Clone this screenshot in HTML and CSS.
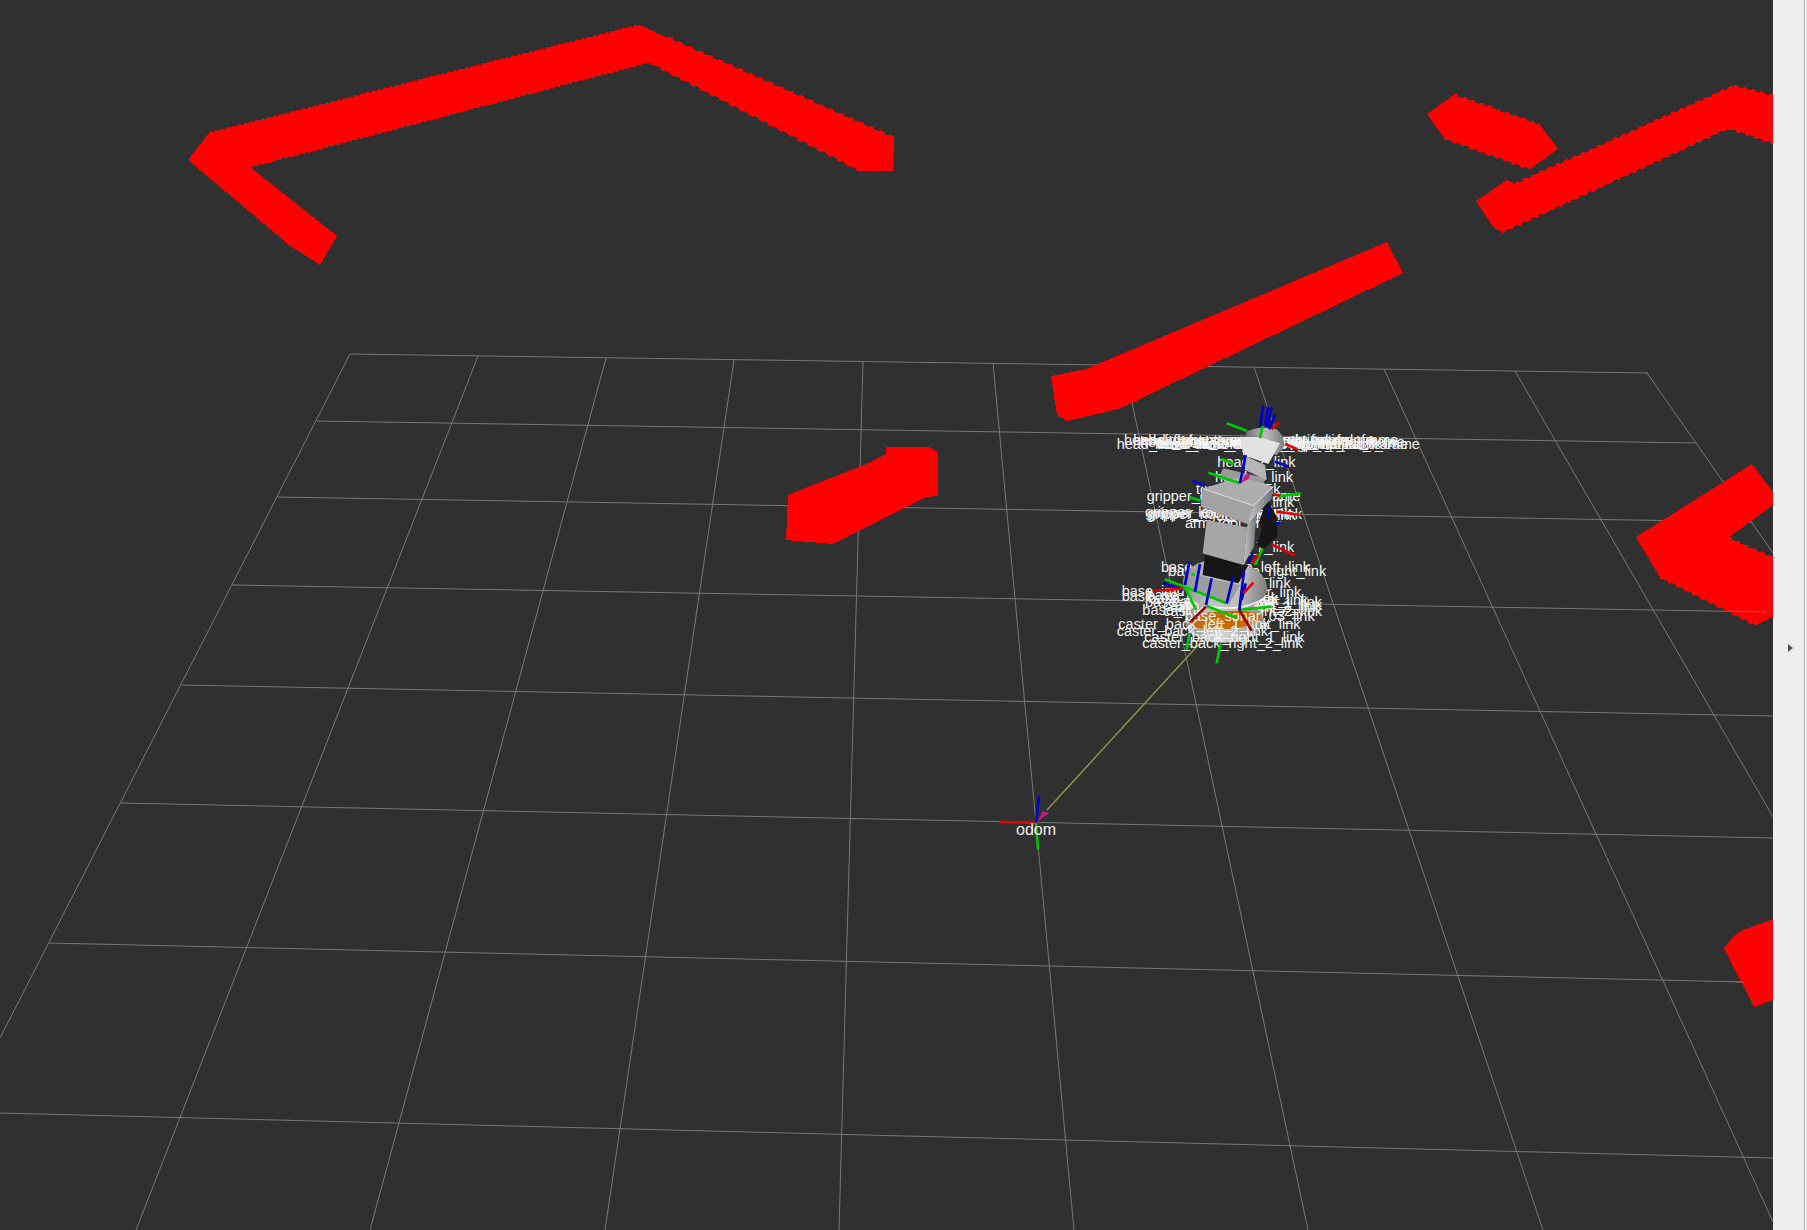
FILE: index.html
```html
<!DOCTYPE html>
<html lang="en">
<head>
<meta charset="utf-8">
<title>RViz</title>
<link rel="stylesheet" href="styles.css">
</head>
<body>
<div class="app">
  <main class="viewport">
    <svg class="scene" viewBox="0 0 1773 1230" xmlns="http://www.w3.org/2000/svg">
      <defs>
        <linearGradient id="disc" x1="0" y1="0" x2="1" y2="0">
          <stop offset="0" stop-color="#8c8c8c"/><stop offset=".35" stop-color="#c4c4c4"/><stop offset=".7" stop-color="#bdbdbd"/><stop offset="1" stop-color="#7c7c7c"/>
        </linearGradient>
        <linearGradient id="rim" x1="0" y1="0" x2="1" y2="0">
          <stop offset="0" stop-color="#8a8a8a"/><stop offset=".45" stop-color="#d8d8d8"/><stop offset="1" stop-color="#8c8c8c"/>
        </linearGradient>
        <linearGradient id="side" x1="0" y1="0" x2="1" y2="0">
          <stop offset="0" stop-color="#c6c6c6"/><stop offset="1" stop-color="#6f6f6f"/>
        </linearGradient>
        <linearGradient id="headback" x1="0" y1="0" x2="1" y2="0">
          <stop offset="0" stop-color="#6e6e6e"/><stop offset=".5" stop-color="#bcbcbc"/><stop offset="1" stop-color="#7e7e7e"/>
        </linearGradient>
      </defs>

      <path class="grid" d="M350 354L1648 373M317 421L1695 443M278 497L1751 522M232 585L1767 612M182 685L1773 716M121 803L1773 838M49 943L1744 982M0 1113L1773 1158"/>
      <path class="grid" d="M350 354L0 1038M478 356L136 1230M606 358L370 1230M734 360L605 1230M863 361L839 1230M993 363L1074 1230M1124 365L1308 1230M1254 367L1543 1230M1384 369L1773 1222M1515 371L1773 817M1647 373L1773 553"/>

      <g class="walls">
        <polygon points="188,160 209,133 640,25 668,38 894,138 893,171 861,171 651,63 646,63 250,167 337,236 320,265 289,245"/>
        <polygon points="1427,114 1454,95 1540,125 1558,149 1530,169 1444,138"/>
        <polygon points="1476,201 1507,180 1515,184 1734,86 1773,96 1773,143 1728,128 1502,232 1494,228"/>
        <polygon points="1387,242 1403,273 1119,409 1067,421 1057,415 1051,376 1086,369"/>
        <polygon points="886,447 929,447 938,452 938,496 926,497 833,544 786,540 788,495 871,462 886,454"/>
        <polygon points="1752,464 1773,492 1773,505 1728,538 1773,558 1773,617 1756,625 1660,577 1636,537"/>
        <polygon points="1724,948 1735,935 1743,930 1773,919 1773,1000 1754,1007"/>
        <path class="jag jag-fine" d="M209 133L640 25M250 167L646 63"/>
        <path class="jag jag-wide" d="M668 38L894 138M861 171L651 63"/>
        <path class="jag jag-mid" d="M1454 95L1540 125M1444 138L1530 169M1515 184L1734 86M1502 232L1728 128M1734 86L1773 96M1728 128L1773 143M1660 577L1756 625M1728 538L1773 558"/>
      </g>
      <path class="grid-over" d="M1727 611L1767 612M1735 982L1744 982"/>

      <line class="tf-line" x1="1201" y1="642" x2="1047" y2="810"/>
      <polygon class="tf-arrow" points="1037,822 1043,811 1049,813"/>
      <path class="axis axis-b" d="M1036 823L1039 796"/>
      <path class="axis axis-r" d="M1036 823L999 822"/>
      <path class="axis axis-g" d="M1036 823L1038 850"/>
      <text class="label-odom" x="1016" y="835">odom</text>

      <g transform="translate(1080 390) scale(.33333)">
        <g class="labels">
          <text x="110" y="177">head_front_camera_depth_optical_frame</text>
          <text x="132" y="165">head_front_camera_rgb_optical_frame</text>
          <text x="160" y="165">head_front_camera_depth_optical_frame</text>
          <text x="180" y="170">head_front_camera_depth_optical_frame</text>
          <text x="225" y="177">head_front_camera_depth_optical_frame</text>
          <text x="235" y="176">head_front_camera_rgb_optical_frame</text>
          <text x="205" y="165">head_front_camera_rgb_frame</text>
          <text x="290" y="170">head_front_camera_link</text>
          <text x="412" y="230">head_2_link</text>
          <text x="405" y="275">head_1_link</text>
          <text x="348" y="313">torso_lift_link</text>
          <text x="200" y="333">gripper_grasping_frame</text>
          <text x="195" y="380">gripper_left_finger_link</text>
          <text x="200" y="388">gripper_right_finger_link</text>
          <text x="205" y="384">gripper_tool_link</text>
          <text x="315" y="415">arm_tool_link</text>
          <text x="430" y="350">arm_6_link</text>
          <text x="435" y="390">arm_5_link</text>
          <text x="430" y="485">arm_7_link</text>
          <text x="243" y="545">base_antenna_left_link</text>
          <text x="265" y="558">base_antenna_right_link</text>
          <text x="330" y="593">base_laser_link</text>
          <text x="350" y="622">base_cover_link</text>
          <text x="400" y="645">wheel_left_link</text>
          <text x="276" y="650">caster_front_left_1_link</text>
          <text x="270" y="665">caster_front_left_2_link</text>
          <text x="250" y="660">caster_front_right_1_link</text>
          <text x="250" y="678">caster_front_right_2_link</text>
          <text x="350" y="718">wheel_right_link</text>
          <text x="125" y="618">base_imu_link</text>
          <text x="125" y="632">base_mic_link</text>
          <text x="200" y="630">base_footprint</text>
          <text x="195" y="650">base_sonar_01_link</text>
          <text x="205" y="640">base_sonar_02_link</text>
        </g>

        <ellipse class="fill-rim" cx="432" cy="692" rx="118" ry="66"/>
        <ellipse class="fill-orange" cx="435" cy="690" rx="108" ry="28" transform="rotate(-4 435 690)"/>
        <ellipse class="fill-disc" cx="435" cy="585" rx="127" ry="77" transform="rotate(6 435 585)"/>
        <path class="rim-light" d="M385 650Q500 665 555 622"/>

        <g class="labels">
          <text x="187" y="675">base_link</text>
          <text x="315" y="693">base_sonar_03_link</text>
          <text x="115" y="717">caster_back_left_1_link</text>
          <text x="110" y="738">caster_back_left_2_link</text>
          <text x="193" y="755">caster_back_right_1_link</text>
          <text x="187" y="775">caster_back_right_2_link</text>
        </g>

        <polygon class="fill-plate" points="345,555 480,585 445,645 335,600"/>
        <polygon class="fill-black" points="375,495 505,525 475,580 368,555"/>
        <polygon class="fill-black" points="530,465 545,420 538,395 560,325 590,380 592,440 550,478"/>

        <path class="fill-neck" d="M430 235L560 265L535 300L415 265Z"/>
        <path class="fill-neck-dark" d="M497 198L555 225L560 270L495 240Z"/>
        <polygon class="fill-mid" points="380,390 500,412 490,525 368,490"/>
        <polygon class="fill-side" points="500,412 532,335 522,470 490,525"/>
        <polygon class="fill-top" points="368,296 480,260 580,290 520,347"/>
        <polygon class="fill-front" points="368,296 520,347 503,403 362,350"/>
        <polygon class="fill-side" points="520,347 580,290 575,325 503,403"/>
        <path class="edge-light" d="M368 296L520 347L580 290"/>

        <path class="fill-headback" d="M498 125Q540 105 590 118Q615 140 612 170L590 195L500 170Z"/>
        <polygon class="fill-head" points="480,140 540,142 600,160 565,222 490,195"/>

        <path class="robot-axis axis-g" d="M440 100L500 122M540 145L548 108M425 207L460 222M385 248L480 280M330 322L362 332M600 318L662 310M525 525L548 475M255 568L440 640M380 648L470 683M475 660L575 650M315 590L348 660M335 553L345 555M320 780L328 730M410 820L422 760"/>
        <path class="robot-axis axis-b" d="M540 110L550 45M555 105L565 50M562 110L575 52M568 118L585 75M585 215L627 230M480 280L497 195M337 272L375 288M563 380L567 350M590 405L600 395M505 520L518 490M315 585L328 515M345 605L360 522M378 645L395 565M440 640L460 560M478 660L492 543M485 630L497 580M250 580L310 600"/>
        <path class="robot-axis axis-r" d="M575 118L597 96M615 162L652 178M580 312L600 318M590 365L660 375M575 463L645 497M515 520L535 497M220 603L310 595M490 610L520 578M470 757L476 763"/>
        <path class="robot-axis axis-dr" d="M330 697L378 650M478 660L515 722"/>
        <polygon class="tf-arrow" points="482,280 495,255 512,252 505,268"/>
      </g>
    </svg>
  </main>
  <aside class="side">
    <div class="side-body">
      <span class="arrow"></span>
      <span class="dots"></span>
    </div>
  </aside>
</div>
</body>
</html>
```
FILE: styles.css
```css
html, body {
  margin: 0;
  height: 100%;
  background: #303030;
  overflow: hidden;
}
.app {
  display: flex;
  width: 1807px;
  height: 1230px;
}
.viewport {
  flex: 1;
  min-width: 0;
  background: #303030;
}
.scene {
  display: block;
  width: 100%;
  height: 100%;
}
.grid {
  fill: none;
  stroke: #787878;
  stroke-width: 1;
}
.grid-over {
  fill: none;
  stroke: #e04848;
  stroke-width: 1;
}
.walls polygon {
  fill: #ff0000;
  shape-rendering: crispEdges;
}
.jag {
  fill: none;
  stroke: #ff0000;
  shape-rendering: crispEdges;
}
.jag-fine { stroke-width: 2; stroke-dasharray: 3 3; }
.jag-wide { stroke-width: 3; stroke-dasharray: 5 6; }
.jag-mid { stroke-width: 3; stroke-dasharray: 4 5; }
.tf-line {
  stroke: #8f8f45;
  stroke-width: 1.5;
}
.tf-arrow { fill: #c8197f; }
.axis {
  fill: none;
  stroke-width: 2.5;
}
.robot-axis {
  fill: none;
  stroke-width: 8;
}
.axis-r { stroke: #e60000; }
.axis-g { stroke: #00c800; }
.axis-b { stroke: #0000cc; }
.axis-dr { stroke: #a00000; }
.label-odom {
  font-family: "Liberation Sans", Arial, sans-serif;
  font-size: 16px;
  fill: #f4f4f4;
}
.labels text {
  font-family: "Liberation Sans", Arial, sans-serif;
  font-size: 43.5px;
  fill: #f4f4f4;
}
.fill-rim { fill: url(#rim); }
.fill-orange { fill: #c86a00; }
.fill-disc { fill: url(#disc); }
.rim-light {
  fill: none;
  stroke: #f4f4f4;
  stroke-width: 5;
}
.fill-plate { fill: #9c9c9c; }
.fill-black { fill: #151515; }
.fill-neck { fill: #9a9a9a; }
.fill-neck-dark { fill: #b4b4b4; }
.fill-mid { fill: #a6a6a6; }
.fill-side { fill: url(#side); }
.fill-top { fill: #adadad; }
.fill-front { fill: #a2a2a2; }
.edge-light {
  fill: none;
  stroke: #e0e0e0;
  stroke-width: 3;
}
.fill-headback { fill: url(#headback); }
.fill-head { fill: #e2e2e2; }
.side {
  width: 34px;
  flex: none;
  box-sizing: border-box;
  background: #efefef;
  display: flex;
}
.side-body {
  width: 31px;
  box-sizing: border-box;
  display: flex;
  align-items: center;
  padding: 66px 3px 0 15px;
  gap: 9px;
  height: 100%;
  box-shadow: 1px 0 0 #b4b4b4;
}
.arrow {
  width: 0;
  height: 0;
  border-style: solid;
  border-width: 4px 0 4px 5px;
  border-color: transparent transparent transparent #555;
}
.dots {
  width: 1px;
  height: 18px;
  background: repeating-linear-gradient(#a8a8a8 0 1px, transparent 1px 3.2px);
}
```
